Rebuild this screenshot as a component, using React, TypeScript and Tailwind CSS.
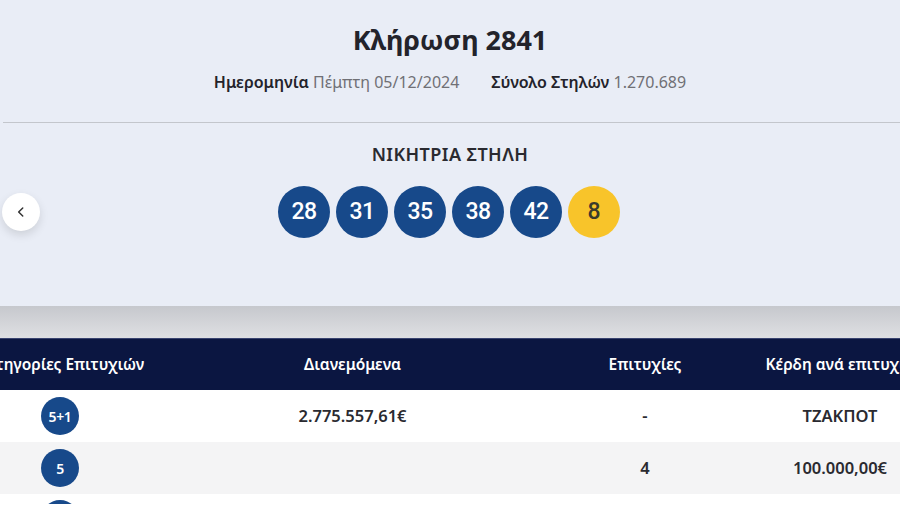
// Αποτελέσματα κλήρωσης — κεφαλίδα με νικήτρια στήλη και πίνακας κατηγοριών

const numbers = [28, 31, 35, 38, 42];
const joker = 8;

const rows = [
  { cat: '5+1', dist: '2.775.557,61€', wins: '-', prize: 'ΤΖΑΚΠΟΤ', bg: 'bg-white' },
  { cat: '5', dist: '', wins: '4', prize: '100.000,00€', bg: 'bg-[#f4f4f5]' },
];

const font = { fontFamily: '"Noto Sans", "Open Sans", sans-serif' };

export default function App() {
  return (
    <div className="w-[900px] h-[513px] overflow-hidden bg-white text-[#222]" style={font}>
      {/* πάνω πάνελ */}
      <div className="h-[306px] bg-[#e9edf6] flex flex-col items-center">
        <h1 className="mt-[22px] text-[27px] leading-[36px] font-bold text-[#23232b]">Κλήρωση 2841</h1>
        <div className="mt-[13px] flex items-center gap-[32px] text-[16px] leading-[22px]">
          <span>
            <span className="font-semibold text-[#23232b]">Ημερομηνία</span>{' '}
            <span className="text-[#707075]">Πέμπτη 05/12/2024</span>
          </span>
          <span>
            <span className="font-semibold text-[#23232b]">Σύνολο Στηλών</span>{' '}
            <span className="text-[#707075]">1.270.689</span>
          </span>
        </div>
        <div className="mt-[29px] self-stretch ml-[3px] h-px bg-[#c3c6cc]" />
        <div className="mt-[19px] text-[18px] leading-[24px] font-semibold tracking-wide text-[#2a2a30]">ΝΙΚΗΤΡΙΑ ΣΤΗΛΗ</div>
        <div className="mt-[20px] self-stretch flex items-center">
          <button className="ml-[2px] w-[38px] h-[38px] rounded-full bg-white shadow-[0_4px_10px_rgba(0,0,0,0.12)] flex items-center justify-center text-[#333]">
            <svg className="w-[14px] h-[14px]" fill="none" stroke="currentColor" viewBox="0 0 24 24">
              <path strokeLinecap="round" strokeLinejoin="round" strokeWidth={2.5} d="M15 5l-7 7 7 7" />
            </svg>
          </button>
          <div className="ml-[238px] flex gap-[6px]">
            {numbers.map((n) => (
              <div
                key={n}
                className="w-[52px] h-[52px] rounded-full bg-[#17498a] text-white flex items-center justify-center text-[23px] font-medium tracking-tight"
                style={{ fontFamily: 'Roboto, sans-serif' }}
              >
                {n}
              </div>
            ))}
            <div
              className="w-[52px] h-[52px] rounded-full bg-[#f8c42a] text-[#3b3a2c] flex items-center justify-center text-[23px] font-medium"
              style={{ fontFamily: 'Roboto, sans-serif' }}
            >
              {joker}
            </div>
          </div>
        </div>
      </div>

      {/* σκιά */}
      <div className="h-[32px] bg-gradient-to-b from-[#c6c8cd] to-[#dfe0e3]" />

      {/* πίνακας κατηγοριών */}
      <div className="overflow-hidden">
        <div className="-ml-[60px] w-[975px]">
          <div className="grid grid-cols-[240px_345px_240px_150px] h-[52px] items-center bg-[#0b1641] text-white text-[15.5px] font-semibold border-t border-[#3a4470]">
            <div className="text-center whitespace-nowrap">Κατηγορίες Επιτυχιών</div>
            <div className="text-center whitespace-nowrap">Διανεμόμενα</div>
            <div className="text-center whitespace-nowrap">Επιτυχίες</div>
            <div className="text-center whitespace-nowrap">Κέρδη ανά επιτυχία</div>
          </div>
          {rows.map((r) => (
            <div
              key={r.cat}
              className={`grid grid-cols-[240px_345px_240px_150px] h-[52px] items-center text-[16.5px] font-semibold text-[#2a2a30] ${r.bg}`}
            >
              <div className="flex justify-center">
                <div className="w-[38px] h-[38px] rounded-full bg-[#17498a] text-white flex items-center justify-center text-[14px] font-semibold tracking-tight">
                  {r.cat}
                </div>
              </div>
              <div className="text-center">{r.dist}</div>
              <div className="text-center">{r.wins}</div>
              <div className="text-center whitespace-nowrap">{r.prize}</div>
            </div>
          ))}
          {/* επόμενη γραμμή — φαίνεται μόνο η κορυφή της μπάλας */}
          <div className="h-[10px] overflow-hidden grid grid-cols-[240px_345px_240px_150px] bg-white">
            <div className="flex justify-center pt-[6px]">
              <div className="w-[38px] h-[38px] rounded-full bg-[#17498a]" />
            </div>
          </div>
        </div>
      </div>
    </div>
  );
}
